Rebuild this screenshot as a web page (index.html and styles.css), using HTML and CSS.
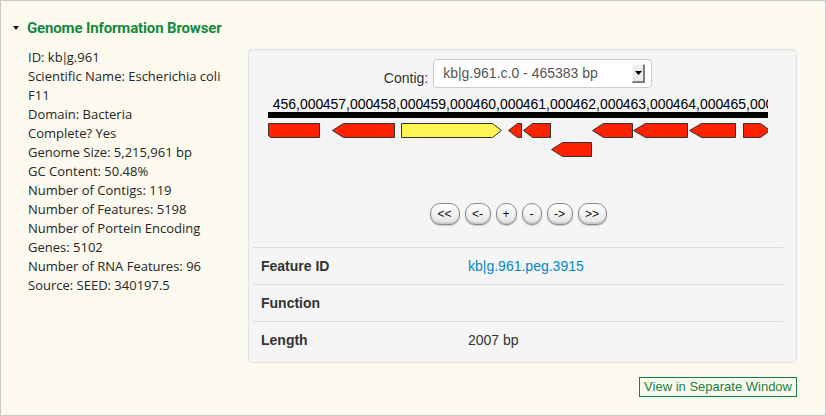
FILE: index.html
```html
<!DOCTYPE html>
<html>
<head>
<meta charset="utf-8">
<title>Genome Information Browser</title>
<link rel="stylesheet" href="styles.css">
</head>
<body>
<div class="page">
  <div class="header">
    <span class="caret"></span>
    <h1 class="title">Genome Information Browser</h1>
  </div>
  <div class="content">
    <div class="info">
      <div>ID: kb<span class="pipe">|</span>g.961</div>
      <div>Scientific Name: Escherichia coli F11</div>
      <div>Domain: Bacteria</div>
      <div>Complete? Yes</div>
      <div>Genome Size: 5,215,961 bp</div>
      <div>GC Content: 50.48%</div>
      <div>Number of Contigs: 119</div>
      <div>Number of Features: 5198</div>
      <div>Number of Portein Encoding Genes: 5102</div>
      <div>Number of RNA Features: 96</div>
      <div>Source: SEED: 340197.5</div>
    </div>
    <div class="panel">
      <div class="contig-row">
        <span class="contig-label">Contig:</span>
        <div class="select">
          <span class="select-text">kb|g.961.c.0 - 465383 bp</span>
          <span class="select-btn"><svg width="7" height="4" viewBox="0 0 7 4"><path d="M0,0 H7 L3.5,4 Z" fill="#000"/></svg></span>
        </div>
      </div>
      <svg class="track" width="500" height="65" viewBox="0 0 500 65">
        <g font-family="Liberation Sans, Arial, sans-serif" font-size="14" fill="#000" text-anchor="middle">
          <text x="30" y="13.7">456,000</text>
          <text x="80" y="13.7">457,000</text>
          <text x="130" y="13.7">458,000</text>
          <text x="180" y="13.7">459,000</text>
          <text x="230" y="13.7">460,000</text>
          <text x="280" y="13.7">461,000</text>
          <text x="330" y="13.7">462,000</text>
          <text x="380" y="13.7">463,000</text>
          <text x="430" y="13.7">464,000</text>
          <text x="480" y="13.7">465,000</text>
        </g>
        <g fill="#888">
          <rect x="29.5" y="15" width="1" height="2"/>
          <rect x="79.5" y="15" width="1" height="2"/>
          <rect x="129.5" y="15" width="1" height="2"/>
          <rect x="179.5" y="15" width="1" height="2"/>
          <rect x="229.5" y="15" width="1" height="2"/>
          <rect x="279.5" y="15" width="1" height="2"/>
          <rect x="329.5" y="15" width="1" height="2"/>
          <rect x="379.5" y="15" width="1" height="2"/>
          <rect x="429.5" y="15" width="1" height="2"/>
          <rect x="479.5" y="15" width="1" height="2"/>
        </g>
        <rect x="0" y="17" width="500" height="6" fill="#000"/>
        <g stroke="#333" stroke-width="1" stroke-linejoin="miter">
          <path d="M0.5,28.5 H51.5 V42.5 H2.5 L0.5,40.5 Z" fill="#ff2200"/>
          <path d="M64.5,35.5 L75.5,28.5 H126.5 V42.5 H75.5 Z" fill="#ff2200"/>
          <path d="M133.5,28.5 H224.5 L233.5,35.5 L224.5,42.5 H133.5 Z" fill="#fff552"/>
          <path d="M240.5,35.5 L249.5,28.5 H253.5 V42.5 H249.5 Z" fill="#ff2200"/>
          <path d="M255.5,35.5 L264.5,28.5 H282.5 V42.5 H264.5 Z" fill="#ff2200"/>
          <path d="M283.5,54.5 L294.5,47.5 H323.5 V61.5 H294.5 Z" fill="#ff2200"/>
          <path d="M324.5,35.5 L335.5,28.5 H364.5 V42.5 H335.5 Z" fill="#ff2200"/>
          <path d="M365.5,35.5 L377.5,28.5 H419.5 V42.5 H377.5 Z" fill="#ff2200"/>
          <path d="M421.5,35.5 L433.5,28.5 H467.5 V42.5 H433.5 Z" fill="#ff2200"/>
          <path d="M475.5,28.5 H492.5 L502,35.5 L492.5,42.5 H475.5 Z" fill="#ff2200"/>
        </g>
      </svg>
      <div class="nav">
        <button class="nav-btn w30">&lt;&lt;</button>
        <button class="nav-btn w26">&lt;-</button>
        <button class="nav-btn w21">+</button>
        <button class="nav-btn w20">-</button>
        <button class="nav-btn w26">-&gt;</button>
        <button class="nav-btn w29">&gt;&gt;</button>
      </div>
      <div class="table">
        <div class="row"><div class="cell label">Feature ID</div><div class="cell"><a class="link" href="#">kb|g.961.peg.3915</a></div></div>
        <div class="row"><div class="cell label">Function</div><div class="cell"></div></div>
        <div class="row"><div class="cell label">Length</div><div class="cell">2007 bp</div></div>
      </div>
    </div>
  </div>
  <div class="footer">
    <a class="sep-btn" href="#">View in Separate Window</a>
  </div>
</div>
</body>
</html>
```
FILE: styles.css
```css
html, body {
  margin: 0;
  padding: 0;
}
body {
  background: #fcf9ee;
}
.page {
  box-sizing: border-box;
  width: 826px;
  height: 416px;
  border: 1px solid #c9c9c9;
  background: #fcf9ee;
  overflow: hidden;
}
.header {
  display: flex;
  align-items: center;
  padding: 17px 0 0 12px;
  height: 20px;
}
.caret {
  width: 0;
  height: 0;
  border-left: 3.5px solid transparent;
  border-right: 3.5px solid transparent;
  border-top: 4px solid #111;
  margin-right: 8px;
}
.title {
  margin: 0;
  font-family: Roboto, "Open Sans", sans-serif;
  font-weight: 700;
  font-size: 15px;
  line-height: 20px;
  letter-spacing: -0.15px;
  color: #14893f;
}
.content {
  display: flex;
  align-items: flex-start;
  gap: 15px;
  margin-top: 10px;
  padding-left: 27px;
}
.info {
  width: 205px;
  font-family: "Open Sans", sans-serif;
  font-size: 13px;
  line-height: 19px;
  color: #262626;
}
.pipe {
  margin: 0 -1.5px;
}
.panel {
  box-sizing: border-box;
  width: 549px;
  margin-top: 1px;
  padding: 9px 13px 4px 4px;
  background: #f5f5f5;
  border: 1px solid #e3e3e3;
  border-radius: 4px;
  box-shadow: inset 0 1px 1px rgba(0, 0, 0, 0.04);
  font-family: "Liberation Sans", Arial, sans-serif;
  font-size: 14px;
  color: #333;
}
.contig-row {
  display: flex;
  justify-content: center;
  align-items: flex-start;
  gap: 5px;
  height: 29px;
}
.contig-label {
  padding-top: 9px;
  line-height: 20px;
  color: #333;
}
.select {
  box-sizing: border-box;
  display: flex;
  align-items: center;
  width: 219px;
  height: 29px;
  padding: 0 6px 0 9px;
  background: #fff;
  border: 1px solid #cccccc;
  border-radius: 4px;
}
.select-text {
  color: #555;
  line-height: 27px;
}
.select-btn {
  box-sizing: border-box;
  margin-left: auto;
  width: 13px;
  height: 19px;
  display: flex;
  align-items: center;
  justify-content: center;
  background: #ececec;
  border-top: 1px solid #fafafa;
  border-left: 1px solid #fafafa;
  border-right: 2px solid #7d7d7d;
  border-bottom: 2px solid #7d7d7d;
}
.select-btn svg {
  display: block;
}
.track {
  display: block;
  margin: 7px auto 0;
}
.nav {
  display: flex;
  justify-content: center;
  gap: 5px;
  margin-top: 43px;
  height: 22px;
}
.nav-btn {
  box-sizing: border-box;
  height: 22px;
  padding: 0;
  font-family: "Liberation Sans", Arial, sans-serif;
  font-size: 12px;
  line-height: 20px;
  color: #111;
  background: linear-gradient(#ffffff, #f0f0f0 60%, #e2e2e2);
  border: 1px solid #8c8c8c;
  border-radius: 10px;
  box-shadow: inset 0 -1px 2px rgba(0, 0, 0, 0.18), 0 1px 1px rgba(0, 0, 0, 0.18);
}
.w30 { width: 30px; }
.w26 { width: 26px; }
.w21 { width: 21px; }
.w20 { width: 20px; }
.w29 { width: 29px; }
.table {
  margin-top: 22px;
}
.row {
  display: grid;
  grid-template-columns: 207px 1fr;
  border-top: 1px solid #dddddd;
}
.cell {
  padding: 8px;
  line-height: 20px;
  min-height: 20px;
}
.label {
  font-weight: 700;
  color: #333;
}
.link {
  color: #0088cc;
  text-decoration: none;
}
.footer {
  display: flex;
  justify-content: flex-end;
  margin-top: 14px;
  padding-right: 28px;
}
.sep-btn {
  box-sizing: border-box;
  height: 20px;
  padding: 0 4px;
  border: 1px solid #17803f;
  font-family: "Liberation Sans", Arial, sans-serif;
  font-size: 13px;
  line-height: 18px;
  color: #17803f;
  text-decoration: none;
}
```
